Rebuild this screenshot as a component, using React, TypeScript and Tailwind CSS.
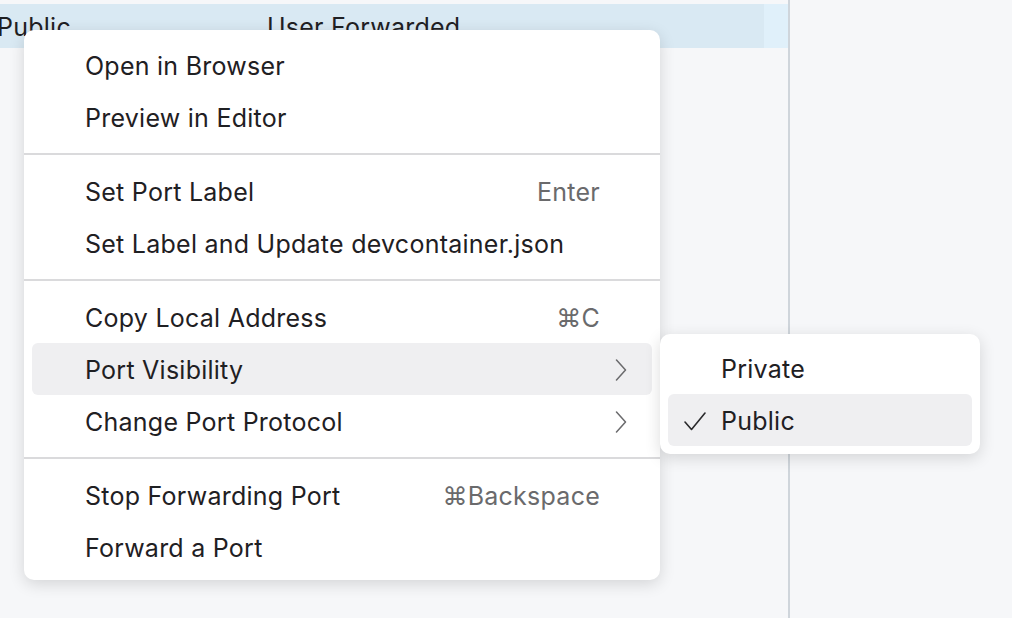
type Item = { label: string; shortcut?: string; sub?: boolean; active?: boolean };

const groups: Item[][] = [
  [{ label: 'Open in Browser' }, { label: 'Preview in Editor' }],
  [{ label: 'Set Port Label', shortcut: 'Enter' }, { label: 'Set Label and Update devcontainer.json' }],
  [
    { label: 'Copy Local Address', shortcut: '⌘C' },
    { label: 'Port Visibility', sub: true, active: true },
    { label: 'Change Port Protocol', sub: true },
  ],
  [{ label: 'Stop Forwarding Port', shortcut: '⌘Backspace' }, { label: 'Forward a Port' }],
];

function Chevron() {
  return (
    <svg width="12" height="22" viewBox="0 0 12 22" className="-mr-[27px]" fill="none">
      <polyline points="1.5,1 10.5,11 1.5,21" stroke="#6a6a6c" strokeWidth="1.5" strokeLinecap="round" strokeLinejoin="round" />
    </svg>
  );
}

function MenuRow({ item }: { item: Item }) {
  return (
    <div
      className={`mx-2 h-[52px] flex items-center pl-[53px] pr-[52px] pt-[2px] rounded-md ${
        item.active ? 'bg-[#efeff1]' : ''
      }`}
    >
      <span className="flex-1 text-[#1f2023]">{item.label}</span>
      {item.shortcut && <span className="text-[#6a6a6c]">{item.shortcut}</span>}
      {item.sub && <Chevron />}
    </div>
  );
}

export default function App() {
  return (
    <div
      className="relative w-[1012px] h-[618px] overflow-hidden bg-[#f6f7f9] flex text-[25px] tracking-[0.25px] leading-none"
      style={{ fontFamily: 'Inter, "Noto Sans", sans-serif' }}
    >
      <div className="w-[788px] pt-[4px] bg-[#f6f7f9]">
        <div className="h-[44px] flex bg-[#d9e9f3] text-[#1f2023]">
          <div className="w-[764px] flex items-center pt-[2px]">
            <span className="ml-[-3px] w-[270px]">Public</span>
            <span>User Forwarded</span>
          </div>
          <div className="flex-1 bg-[#e0f0fa]" />
        </div>
      </div>
      <div className="w-[2px] bg-[#cfd5db]" />
      <div className="flex-1 bg-[#f6f7f9]" />

      {/* context menu */}
      <div className="absolute left-[24px] top-[30px] w-[636px] bg-white rounded-[10px] shadow-[0_4px_16px_rgba(0,0,0,0.14)] pt-[9px] pb-[7px]">
        {groups.map((g, gi) => (
          <div key={gi}>
            {gi > 0 && <div className="h-[2px] bg-[#dadadc] my-[10px]" />}
            {g.map((it) => (
              <MenuRow key={it.label} item={it} />
            ))}
          </div>
        ))}
      </div>

      {/* submenu */}
      <div className="absolute left-[660px] top-[334px] w-[320px] bg-white rounded-[10px] shadow-[0_4px_16px_rgba(0,0,0,0.14)] py-[8px]">
        <div className="mx-2 h-[52px] flex items-center pl-[53px] pt-[2px] text-[#1f2023]">Private</div>
        <div className="mx-2 h-[52px] flex items-center pt-[2px] rounded-md bg-[#efeff1] text-[#1f2023]">
          <svg width="22" height="19" viewBox="0 0 22 19" className="ml-[16px]" fill="none">
            <polyline points="1,10 7.5,17.5 21,1" stroke="#2a2a2c" strokeWidth="1.6" strokeLinecap="round" strokeLinejoin="round" />
          </svg>
          <span className="ml-[15px]">Public</span>
        </div>
      </div>
    </div>
  );
}
